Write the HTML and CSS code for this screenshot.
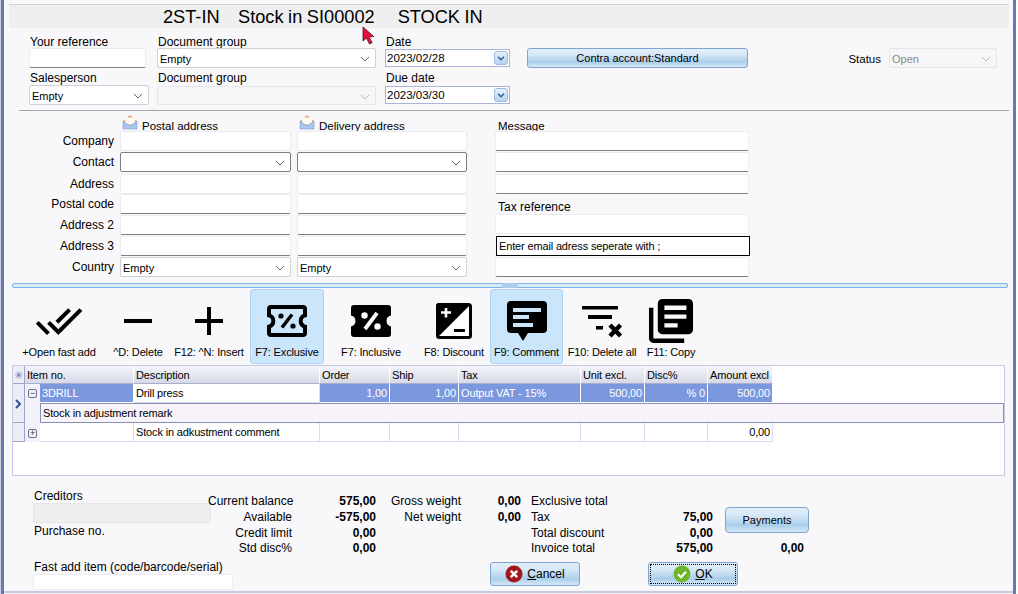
FILE: index.html
```html
<!DOCTYPE html>
<html lang="en">
<head>
    <meta charset="UTF-8">
    <title>Stock in SI00002</title>
    <link rel="stylesheet" href="styles.css">
</head>
<body>

<div class="window">
    <svg class="cursor" width="13" height="19" viewBox="0 0 13 19"><path d="M1 1l0 14 3.5-3 3 6 2.6-1.3-3-5.7 4.7-.5z" fill="#e30f3e" stroke="#5a1020" stroke-width=".8"/></svg>

    <h1 class="title">2ST-IN    Stock in SI00002     STOCK IN</h1>

    <div class="head">
        <div class="field">
            <label>Your reference</label>
            <input class="input input-line" type="text">
        </div>
        <div class="field">
            <label>Document group</label>
            <div class="select select-doc">Empty<svg class="chev" viewBox="0 0 10 6"><path d="M1 1l4 4 4-4" fill="none" stroke="#666"/></svg></div>
        </div>
        <div class="field">
            <label>Date</label>
            <div class="date">2023/02/28<span class="date-btn"><svg viewBox="0 0 8 5"><path d="M1 .8l3 3 3-3" fill="none" stroke="#2a5f9e" stroke-width="1.5"/></svg></span></div>
        </div>
        <button class="btn btn-contra">Contra account:Standard</button>
        <div class="status">
            <span>Status</span>
            <div class="select select-off">Open<svg class="chev" viewBox="0 0 10 6"><path d="M1 1l4 4 4-4" fill="none" stroke="#bbb"/></svg></div>
        </div>

        <div class="field field-low">
            <label>Salesperson</label>
            <div class="select">Empty<svg class="chev" viewBox="0 0 10 6"><path d="M1 1l4 4 4-4" fill="none" stroke="#666"/></svg></div>
        </div>
        <div class="field field-low">
            <label>Document group</label>
            <div class="select select-doc select-off"><svg class="chev" viewBox="0 0 10 6"><path d="M1 1l4 4 4-4" fill="none" stroke="#bbb"/></svg></div>
        </div>
        <div class="field field-low">
            <label>Due date</label>
            <div class="date">2023/03/30<span class="date-btn"><svg viewBox="0 0 8 5"><path d="M1 .8l3 3 3-3" fill="none" stroke="#2a5f9e" stroke-width="1.5"/></svg></span></div>
        </div>
    </div>

    <hr class="rule">

    <div class="address">
        <span></span>
        <div class="addr-head">
            <svg width="16" height="16" viewBox="0 0 16 16"><path d="M1 7l7-6 7 6v8H1z" fill="#e8a878"/><path d="M3 3.500h10v7H3z" fill="#fffaf0"/><path d="M1 7l7 5 7-5v8H1z" fill="#a9c6ee" stroke="#7f9fd0" stroke-width=".6"/></svg>
            <span>Postal address</span>
        </div>
        <div class="addr-head">
            <svg width="16" height="16" viewBox="0 0 16 16"><path d="M1 7l7-6 7 6v8H1z" fill="#e8a878"/><path d="M3 3.500h10v7H3z" fill="#fffaf0"/><path d="M1 7l7 5 7-5v8H1z" fill="#a9c6ee" stroke="#7f9fd0" stroke-width=".6"/></svg>
            <span>Delivery address</span>
        </div>
        <div class="msg addr-head"><span>Message</span></div>

        <label>Company</label>
        <input class="input" type="text">
        <input class="input" type="text">
        <div class="msg"><input class="input input-line" type="text"></div>

        <label>Contact</label>
        <div class="select select-dark"><svg class="chev" viewBox="0 0 10 6"><path d="M1 1l4 4 4-4" fill="none" stroke="#666"/></svg></div>
        <div class="select select-dark"><svg class="chev" viewBox="0 0 10 6"><path d="M1 1l4 4 4-4" fill="none" stroke="#666"/></svg></div>
        <div class="msg"><input class="input input-line" type="text"></div>

        <label>Address</label>
        <input class="input" type="text">
        <input class="input" type="text">
        <div class="msg"><input class="input input-line" type="text"></div>

        <label>Postal code</label>
        <input class="input input-line" type="text">
        <input class="input input-line" type="text">
        <div class="msg msg-label">Tax reference</div>

        <label>Address 2</label>
        <input class="input input-line" type="text">
        <input class="input input-line" type="text">
        <div class="msg"><input class="input input-up" type="text"></div>

        <label>Address 3</label>
        <input class="input input-line" type="text">
        <input class="input input-line" type="text">
        <div class="msg"><div class="email">Enter email adress seperate with ;</div></div>

        <label>Country</label>
        <div class="select">Empty<svg class="chev" viewBox="0 0 10 6"><path d="M1 1l4 4 4-4" fill="none" stroke="#666"/></svg></div>
        <div class="select">Empty<svg class="chev" viewBox="0 0 10 6"><path d="M1 1l4 4 4-4" fill="none" stroke="#666"/></svg></div>
        <div class="msg"><input class="input input-line" type="text"></div>
    </div>

    <div class="splitter"><span class="grip"></span></div>

    <div class="toolbar">
        <div class="tool tool-open">
            <svg class="icon" viewBox="0 0 24 24"><path d="M18 7l-1.41-1.41-6.34 6.34 1.41 1.41L18 7zm4.24-1.41L11.66 16.17 7.48 12l-1.41 1.41L11.66 19l12-12-1.42-1.41zM.41 13.41L6 19l1.41-1.41L1.83 12 .41 13.41z"/></svg>
            <span>+Open fast add</span>
        </div>
        <div class="tool tool-delete">
            <svg class="icon" viewBox="0 0 24 24"><path d="M19 13H5v-2h14v2z"/></svg>
            <span>^D: Delete</span>
        </div>
        <div class="tool tool-insert">
            <svg class="icon" viewBox="0 0 24 24"><path d="M19 13h-6v6h-2v-6H5v-2h6V5h2v6h6v2z"/></svg>
            <span>F12: ^N: Insert</span>
        </div>
        <div class="tool tool-exclusive tool-on">
            <svg class="icon" viewBox="-4 -8 48 48"><path d="M4 2h32a2 2 0 0 1 2 2v6.4a5.8 5.8 0 0 0 0 11.2V28a2 2 0 0 1-2 2H4a2 2 0 0 1-2-2v-6.4a5.8 5.8 0 0 0 0-11.2V4a2 2 0 0 1 2-2z" fill="none" stroke="#000" stroke-width="4"/><path d="M25 9.500L15 22.500" stroke="#000" stroke-width="3.400"/><circle cx="14" cy="11" r="2.600"/><circle cx="26" cy="21" r="2.600"/></svg>
            <span>F7: Exclusive</span>
        </div>
        <div class="tool tool-inclusive">
            <svg class="icon" viewBox="-4 -8 48 48"><path d="M3 0h34a3 3 0 0 1 3 3v7.600a5.500 5.500 0 0 0 0 10.800V29a3 3 0 0 1-3 3H3a3 3 0 0 1-3-3v-7.600a5.500 5.500 0 0 0 0-10.800V3a3 3 0 0 1 3-3z"/><path d="M26 8L14 24" stroke="#fff" stroke-width="3.800"/><circle cx="13.500" cy="10.500" r="3.200" fill="#fff"/><circle cx="26.500" cy="21.500" r="3.200" fill="#fff"/></svg>
            <span>F7: Inclusive</span>
        </div>
        <div class="tool tool-discount">
            <svg class="icon" viewBox="-6 -6 48 48"><rect x="1.500" y="1.500" width="33" height="33" rx="2" fill="#fff" stroke="#000" stroke-width="3"/><path d="M3 0h30v3L3 33H0V3a3 3 0 0 1 3-3z"/><path d="M5 9.500h10M10 5v9.500" stroke="#fff" stroke-width="2.600"/><path d="M18 27.500h11" stroke="#000" stroke-width="3"/></svg>
            <span>F8: Discount</span>
        </div>
        <div class="tool tool-comment tool-on">
            <svg class="icon" viewBox="-4 -4 48 48"><path d="M4 0h32a4 4 0 0 1 4 4v24a4 4 0 0 1-4 4H21l-5 8-5-8H4a4 4 0 0 1-4-4V4a4 4 0 0 1 4-4z"/><path d="M6 7h28v4H6zM6 14h16v4H6zM6 22h20v4H6z" fill="#cbe6fb"/></svg>
            <span>F9: Comment</span>
        </div>
        <div class="tool tool-clear">
            <svg class="icon" viewBox="-4 -8 48 48"><path d="M0 1h36v3.500H0zM6 10h24v4H6zM14 21h7v3.500h-7z"/><path d="M28 20l10.500 11M38.500 20L28 31" stroke="#000" stroke-width="4.400"/></svg>
            <span>F10: Delete all</span>
        </div>
        <div class="tool tool-copy">
            <svg class="icon" viewBox="1.100 1.100 21.800 21.800"><path d="M4 6H2v14c0 1.100.9 2 2 2h14v-2H4V6zm16-4H8c-1.100 0-2 .9-2 2v12c0 1.100.9 2 2 2h12c1.100 0 2-.9 2-2V4c0-1.100-.9-2-2-2zm-1 9H9V9h10v2zm-4 4H9v-2h6v2zm4-8H9V5h10v2z"/></svg>
            <span>F11: Copy</span>
        </div>
    </div>

    <div class="lines">
        <table>
            <colgroup>
                <col class="c-mark"><col class="c-toggle"><col class="c-item"><col class="c-desc"><col class="c-order"><col class="c-ship"><col class="c-tax"><col class="c-unit"><col class="c-disc"><col class="c-amount"><col class="c-rest">
            </colgroup>
            <thead>
                <tr>
                    <th class="mark">&#10035;</th>
                    <th colspan="2">Item no.</th>
                    <th>Description</th>
                    <th>Order</th>
                    <th>Ship</th>
                    <th>Tax</th>
                    <th>Unit excl.</th>
                    <th>Disc%</th>
                    <th>Amount excl</th>
                    <th class="rest"></th>
                </tr>
            </thead>
            <tbody>
                <tr class="row-main">
                    <td class="mark" rowspan="2"><svg class="pointer" width="7" height="10" viewBox="0 0 7 10"><path d="M1 1l4 4-4 4" fill="none" stroke="#34509c" stroke-width="2"/></svg></td>
                    <td class="toggle"><span class="box">&minus;</span></td>
                    <td class="sel">3DRILL</td>
                    <td>Drill press</td>
                    <td class="sel num">1,00</td>
                    <td class="sel num">1,00</td>
                    <td class="sel">Output VAT - 15%</td>
                    <td class="sel num">500,00</td>
                    <td class="sel num">% 0</td>
                    <td class="sel num">500,00</td>
                    <td class="rest"></td>
                </tr>
                <tr class="row-remark">
                    <td class="toggle"></td>
                    <td class="remark" colspan="9">Stock in adjustment remark</td>
                </tr>
                <tr class="row-main row-last">
                    <td class="mark"></td>
                    <td class="toggle"><span class="box">+</span></td>
                    <td></td>
                    <td>Stock in adkustment comment</td>
                    <td></td>
                    <td></td>
                    <td></td>
                    <td></td>
                    <td></td>
                    <td class="num">0,00</td>
                    <td class="rest"></td>
                </tr>
            </tbody>
        </table>
    </div>

    <div class="foot">
        <div class="foot-left">
            <label>Creditors</label>
            <input class="input input-grey" type="text">
            <label class="gap-small">Purchase no.</label>
            <label class="gap-big">Fast add item (code/barcode/serial)</label>
            <input class="input input-fast" type="text">
        </div>
        <div class="foot-right">
            <div class="totals">
                <span class="lbl">Current balance</span><b>575,00</b>
                <span class="lbl">Gross weight</span><b>0,00</b>
                <span class="lbl-left">Exclusive total</span><b></b>
                <button class="btn btn-pay">Payments</button>

                <span class="lbl">Available</span><b>-575,00</b>
                <span class="lbl">Net weight</span><b>0,00</b>
                <span class="lbl-left">Tax</span><b>75,00</b>

                <span class="lbl">Credit limit</span><b>0,00</b>
                <span></span><b></b>
                <span class="lbl-left">Total discount</span><b>0,00</b>

                <span class="lbl">Std disc%</span><b>0,00</b>
                <span></span><b></b>
                <span class="lbl-left">Invoice total</span><b>575,00</b>
                <b class="paid">0,00</b>
            </div>
            <div class="actions">
                <button class="btn btn-act">
                    <svg width="18" height="18" viewBox="0 0 18 18"><circle cx="9" cy="9" r="8.500" fill="#a3181c"/><path d="M5.800 5.800l6.400 6.400M12.200 5.800l-6.400 6.400" stroke="#fff" stroke-width="2.400"/></svg>
                    <span><u>C</u>ancel</span>
                </button>
                <button class="btn btn-act btn-focus">
                    <svg width="18" height="18" viewBox="0 0 18 18"><circle cx="9" cy="9" r="8.500" fill="#6fb52c"/><path d="M5 9.200l3 3 5-5.400" fill="none" stroke="#fff" stroke-width="2.200"/></svg>
                    <span><u>O</u>K</span>
                </button>
            </div>
        </div>
    </div>
</div>

</body>
</html>
```

FILE: styles.css
```css
html, body {
    margin: 0;
    padding: 0;
    background: #fff;
}
body {
    font-family: "Liberation Sans", Arial, sans-serif;
    font-size: 12px;
    color: #000;
}
.window {
    position: relative;
    box-sizing: border-box;
    width: 1015px;
    height: 594px;
    margin-left: 1px;
    padding-top: 4px;
    overflow: hidden;
    background: #f8f8fb;
    border-left: 3px solid #6a77b5;
    border-right: 3px solid #6a77b5;
    box-shadow: -1px 0 0 #d0d0d8;
}
.cursor {
    position: absolute;
    left: 358px;
    top: 26px;
}
.title {
    margin: 0 4px 0 5px;
    height: 23px;
    padding-left: 154px;
    border-top: 1px solid #d0d0d8;
    background: #efefef;
    font-size: 18.2px;
    font-weight: normal;
    word-spacing: -.45px;
    line-height: 25px;
    white-space: pre;
}

/* top fields */
.head {
    display: grid;
    grid-template-columns: 120px 220px 134px 221px 241px;
    grid-template-rows: 32px 33px;
    column-gap: 8px;
    row-gap: 4px;
    margin: 8px 0 0 25px;
}
.field {
    display: flex;
    flex-direction: column;
    line-height: 12px;
}
.field label {
    height: 12px;
    margin-left: 1px;
}
.field-low label {
    height: 14px;
}
.field .input {
    width: 117px;
}
.field .select {
    flex: 1;
}
.select-doc {
    width: 219px;
}
.input {
    box-sizing: border-box;
    display: block;
    width: 100%;
    height: 20px;
    padding: 0;
    border: 1px solid #ececf0;
    border-radius: 2px;
    background: #fff;
}
.input-line {
    border-bottom-color: #7f7f7f;
}
.input-up {
    margin-top: -1px;
}
.input-grey {
    width: 178px;
    background: #efefef;
    border-color: #e6e6e6;
}
.input-fast {
    width: 200px;
    height: 16px;
}
.select {
    position: relative;
    box-sizing: border-box;
    height: 20px;
    padding-left: 2px;
    border: 1px solid #d0d0d4;
    border-radius: 2px;
    background: #fff;
    font-size: 11px;
    line-height: 20px;
}
.select-off {
    background: #f6f6f8;
    border-color: #e6e6e8;
    color: #8a8a8a;
}
.select-dark {
    border-color: #7f7f7f;
}
.chev {
    position: absolute;
    right: 5px;
    top: 7px;
    width: 10px;
    height: 6px;
}
.date {
    position: relative;
    box-sizing: border-box;
    width: 125px;
    height: 18px;
    margin-top: 1px;
    padding-left: 1px;
    border: 1px solid #a9b5d9;
    background: #fff;
    font-size: 11.5px;
    line-height: 16px;
}
.field-low .date {
    margin-top: 0;
}
.date-btn {
    position: absolute;
    right: 1px;
    top: 1px;
    display: flex;
    align-items: center;
    justify-content: center;
    width: 14px;
    height: 14px;
    border: 1px solid #9dbbe0;
    border-radius: 3px;
    box-sizing: border-box;
    background: linear-gradient(#e4f0fb, #b7d4f0);
}
.date-btn svg {
    width: 8px;
    height: 5px;
}
.btn {
    box-sizing: border-box;
    padding: 0;
    border: 1px solid #7ea4cf;
    border-radius: 3px;
    background: linear-gradient(#e3effa, #d3e6f6 35%, #a9cee9 72%, #d6e9f7);
    font-family: inherit;
    font-size: 11px;
    color: #000;
}
.btn-contra {
    align-self: end;
    height: 20px;
}
.status {
    display: flex;
    align-items: center;
    justify-content: flex-end;
    align-self: end;
    gap: 8px;
    height: 20px;
    font-size: 11.5px;
    padding-top: 1px;
    box-sizing: border-box;
}
.status .select {
    width: 108px;
    margin-top: -1px;
}
.rule {
    height: 1px;
    margin: 5px 4px 0 15px;
    padding: 0;
    border: 0;
    background: #a4a4a8;
}

/* address block */
.address {
    display: grid;
    grid-template-columns: 106px 171px 170px 276px;
    grid-template-rows: 18px 21px 22px 20px 21px 21px 21px 20px;
    column-gap: 6px;
    margin: 2px 0 0 4px;
}
.address > label {
    padding-top: 3px;
    line-height: 14px;
    text-align: right;
}
.address > input,
.address > .select {
    height: 20px;
}
.addr-head {
    display: flex;
    align-items: flex-end;
    gap: 4px;
    padding-left: 2px;
    height: 18px;
    overflow: hidden;
    font-size: 11.5px;
    line-height: 13px;
}
.addr-head span {
    margin-bottom: -2px;
}
.addr-head svg {
    align-self: flex-start;
    margin-top: 1px;
}
.addr-head.msg {
    padding-left: 3px;
}
.msg {
    margin-left: 22px;
    width: 254px;
}
.msg-label {
    padding: 6px 0 0 3px;
    line-height: 14px;
}
.email {
    box-sizing: border-box;
    width: 254px;
    height: 20px;
    margin-left: 1px;
    padding-left: 2px;
    border: 1px solid #000;
    background: #fff;
    font-size: 11px;
    letter-spacing: -.15px;
    line-height: 18px;
}
.splitter {
    display: flex;
    justify-content: center;
    box-sizing: border-box;
    width: 996px;
    height: 5px;
    margin: 6px 0 0 8px;
    border: 1px solid #7fb2e5;
    border-radius: 2px;
    background: #d8e9f8;
}
.grip {
    width: 16px;
    height: 5px;
    margin-top: -1px;
    background: #a9cdf0;
}

/* toolbar */
.toolbar {
    display: flex;
    height: 75px;
    margin: 1px 0 0 18px;
}
.tool {
    display: flex;
    flex-direction: column;
    align-items: center;
    box-sizing: border-box;
    height: 75px;
    padding-top: 7px;
    border: 1px solid transparent;
    border-radius: 3px;
    font-size: 11px;
    letter-spacing: -.15px;
    white-space: nowrap;
    line-height: 14px;
}
.tool-on {
    background: #cbe6fb;
    border-color: #a9d3f5;
}
.icon {
    flex: none;
    width: 48px;
    height: 48px;
}
.tool-open { width: 74px; }
.tool-delete { width: 72px; margin-left: 6px; }
.tool-insert { width: 58px; margin-left: 6px; }
.tool-exclusive { width: 74px; margin-left: 12px; }
.tool-inclusive { width: 82px; margin-left: 6px; }
.tool-discount { width: 60px; margin-left: 12px; }
.tool-comment { width: 73px; margin-left: 6px; }
.tool-clear { width: 74px; margin-left: 2px; }
.tool-copy { width: 62px; margin-left: 1px; }

/* item lines */
.lines {
    box-sizing: border-box;
    width: 993px;
    height: 111px;
    margin: 1px 0 0 8px;
    border: 1px solid #c5c8e0;
    background: #fff;
}
.lines table {
    width: 991px;
    table-layout: fixed;
    border-spacing: 0;
    font-size: 11px;
    letter-spacing: -.15px;
}
.c-mark { width: 12px; }
.c-toggle { width: 15px; }
.c-item { width: 94px; }
.c-desc { width: 186px; }
.c-order { width: 70px; }
.c-ship { width: 69px; }
.c-tax { width: 122px; }
.c-unit { width: 64px; }
.c-disc { width: 63px; }
.c-amount { width: 65px; }
.c-rest { width: 231px; }
th, td {
    box-sizing: border-box;
    padding: 0 2px;
    overflow: hidden;
    white-space: nowrap;
    font-weight: normal;
    text-align: left;
}
th {
    height: 18px;
    border-right: 1px solid #fff;
    border-bottom: 1px solid #a8aed0;
    background: linear-gradient(#f4f5fa, #d6d9e6);
    line-height: 16px;
}
td {
    border-right: 1px solid #d8daf0;
    border-bottom: 1px solid #d8daf0;
}
.row-main td {
    height: 19px;
    line-height: 17px;
}
.row-last td {
    height: 18px;
    line-height: 18px;
}
.row-remark td {
    height: 20px;
    line-height: 18px;
}
th.mark, td.mark {
    padding: 0;
    border-right: 1px solid #9ea4c8;
    border-bottom: 1px solid #9ea4c8;
    background: #eceef5;
    text-align: center;
    color: #6a77b5;
    font-size: 11px;
}
.pointer {
    display: block;
    margin: 2px auto 0;
}
td.toggle {
    padding: 0;
    border-right: 0;
    border-bottom: 0;
    background: #f4f2f9;
    text-align: center;
}
.box {
    display: inline-block;
    box-sizing: border-box;
    width: 9px;
    height: 9px;
    border: 1px solid #6a6f95;
    border-radius: 2px;
    font-size: 9px;
    line-height: 7px;
    color: #333;
    vertical-align: 1px;
}
.sel {
    background: #7b98de;
    color: #fff;
    border-right-color: #fff;
    border-bottom-color: #fff;
}
.num {
    text-align: right;
}
th.rest, td.rest {
    border: 0;
    background: #fff;
}
td.remark {
    border: 1px solid #8a8fb8;
    background: #f8f3f9;
}

/* footer */
.foot {
    display: flex;
    box-sizing: border-box;
    height: 117px;
    padding-left: 29px;
    border-bottom: 2px solid #c5c8dc;
}
.foot-left {
    display: flex;
    flex-direction: column;
    width: 175px;
    padding-top: 14px;
    line-height: 13px;
}
.foot-left label {
    margin-left: 1px;
    white-space: nowrap;
}
.gap-small {
    margin-top: 2px;
}
.gap-big {
    margin-top: 23px;
}
.totals {
    display: grid;
    grid-template-columns: 84px 84px 85px 60px 110px 82px 96px;
    grid-template-rows: 16px 16px 15px 15px;
    margin-top: 18px;
    line-height: 15px;
}
.totals b {
    text-align: right;
}
.lbl {
    text-align: right;
    white-space: nowrap;
}
.lbl-left {
    padding-left: 10px;
    white-space: nowrap;
}
.btn-pay {
    grid-column: 7;
    grid-row: 1 / 4;
    align-self: start;
    height: 26px;
    margin: 13px 0 0 12px;
    border-radius: 4px;
}
.paid {
    grid-column: 7;
    padding-right: 5px;
}
.actions {
    display: flex;
    gap: 68px;
    margin: 6px 0 0 282px;
}
.btn-act {
    display: flex;
    align-items: center;
    justify-content: center;
    gap: 4px;
    width: 90px;
    height: 24px;
    font-size: 12px;
}
.btn-focus {
    outline: 1px dotted #000;
    outline-offset: -3px;
}
```
